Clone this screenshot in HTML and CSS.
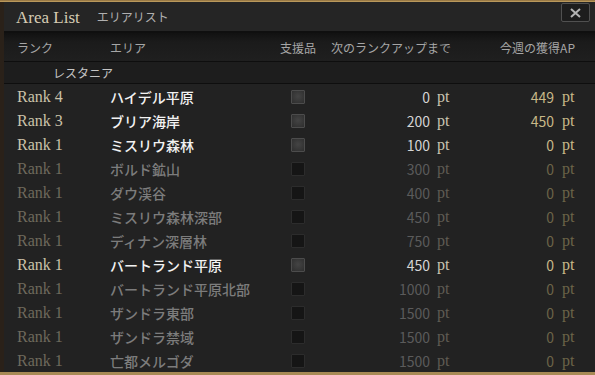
FILE: index.html
```html
<!DOCTYPE html>
<html lang="ja">
<head>
    <meta charset="UTF-8">
    <title>Area List</title>
    <link rel="stylesheet" href="styles.css">
</head>
<body>
    <div class="panel">
        <div class="titlebar">
            <span class="title-en">Area List</span>
            <span class="title-jp">エリアリスト</span>
            <button class="close">
                <svg width="11" height="10" viewBox="0 0 11 10"><path d="M1 1 L10 9 M10 1 L1 9" stroke="#b4b4b4" stroke-width="2" fill="none"/></svg>
            </button>
        </div>

        <div class="head">
            <span class="c-rank">ランク</span>
            <span class="c-area">エリア</span>
            <span class="c-sup">支援品</span>
            <span class="c-next">次のランクアップまで</span>
            <span class="c-ap">今週の獲得AP</span>
        </div>

        <div class="group">レスタニア</div>

        <div class="rows">
            <div class="row on">
                <span class="c-rank">Rank 4</span><span class="c-area">ハイデル平原</span>
                <span class="c-sup"><i class="box"></i></span>
                <span class="num">0</span><span class="pt">pt</span>
                <span class="ap">449</span><span class="pt ap-pt">pt</span>
            </div>
            <div class="row on">
                <span class="c-rank">Rank 3</span><span class="c-area">ブリア海岸</span>
                <span class="c-sup"><i class="box"></i></span>
                <span class="num">200</span><span class="pt">pt</span>
                <span class="ap">450</span><span class="pt ap-pt">pt</span>
            </div>
            <div class="row on">
                <span class="c-rank">Rank 1</span><span class="c-area">ミスリウ森林</span>
                <span class="c-sup"><i class="box"></i></span>
                <span class="num">100</span><span class="pt">pt</span>
                <span class="ap">0</span><span class="pt ap-pt">pt</span>
            </div>
            <div class="row">
                <span class="c-rank">Rank 1</span><span class="c-area">ボルド鉱山</span>
                <span class="c-sup"><i class="box"></i></span>
                <span class="num">300</span><span class="pt">pt</span>
                <span class="ap">0</span><span class="pt ap-pt">pt</span>
            </div>
            <div class="row">
                <span class="c-rank">Rank 1</span><span class="c-area">ダウ渓谷</span>
                <span class="c-sup"><i class="box"></i></span>
                <span class="num">400</span><span class="pt">pt</span>
                <span class="ap">0</span><span class="pt ap-pt">pt</span>
            </div>
            <div class="row">
                <span class="c-rank">Rank 1</span><span class="c-area">ミスリウ森林深部</span>
                <span class="c-sup"><i class="box"></i></span>
                <span class="num">450</span><span class="pt">pt</span>
                <span class="ap">0</span><span class="pt ap-pt">pt</span>
            </div>
            <div class="row">
                <span class="c-rank">Rank 1</span><span class="c-area">ディナン深層林</span>
                <span class="c-sup"><i class="box"></i></span>
                <span class="num">750</span><span class="pt">pt</span>
                <span class="ap">0</span><span class="pt ap-pt">pt</span>
            </div>
            <div class="row on">
                <span class="c-rank">Rank 1</span><span class="c-area">バートランド平原</span>
                <span class="c-sup"><i class="box"></i></span>
                <span class="num">450</span><span class="pt">pt</span>
                <span class="ap">0</span><span class="pt ap-pt">pt</span>
            </div>
            <div class="row">
                <span class="c-rank">Rank 1</span><span class="c-area">バートランド平原北部</span>
                <span class="c-sup"><i class="box"></i></span>
                <span class="num">1000</span><span class="pt">pt</span>
                <span class="ap">0</span><span class="pt ap-pt">pt</span>
            </div>
            <div class="row">
                <span class="c-rank">Rank 1</span><span class="c-area">ザンドラ東部</span>
                <span class="c-sup"><i class="box"></i></span>
                <span class="num">1500</span><span class="pt">pt</span>
                <span class="ap">0</span><span class="pt ap-pt">pt</span>
            </div>
            <div class="row">
                <span class="c-rank">Rank 1</span><span class="c-area">ザンドラ禁域</span>
                <span class="c-sup"><i class="box"></i></span>
                <span class="num">1500</span><span class="pt">pt</span>
                <span class="ap">0</span><span class="pt ap-pt">pt</span>
            </div>
            <div class="row">
                <span class="c-rank">Rank 1</span><span class="c-area">亡都メルゴダ</span>
                <span class="c-sup"><i class="box"></i></span>
                <span class="num">1500</span><span class="pt">pt</span>
                <span class="ap">0</span><span class="pt ap-pt">pt</span>
            </div>
        </div>
    </div>
</body>
</html>
```

FILE: styles.css
```css
body {
    margin: 0;
    padding: 0;
    width: 595px;
    height: 375px;
    overflow: hidden;
    background: linear-gradient(180deg, #8a6a3a 0, #c9a766 2px, #2a2119 2px, #2a2119 372px, #a88a55 372px);
    font-family: "Noto Sans CJK JP", "Noto Sans", sans-serif;
}

.panel {
    margin: 2px 0 0 4px;
    height: 370px;
    background: #222;
    overflow: hidden;
}

.titlebar {
    height: 29px;
    display: flex;
    align-items: center;
    padding-left: 12px;
    background: #252525;
    border-bottom: 2px solid #0f0f0f;
}

.title-en {
    font-family: "Liberation Serif", serif;
    font-size: 17px;
    color: #d6ccb4;
    margin-top: 2px;
}

.title-jp {
    font-size: 12px;
    color: #b0b0b0;
    margin-left: 17px;
}

.close {
    margin-left: auto;
    margin-right: 5px;
    align-self: flex-start;
    margin-top: 1px;
    width: 29px;
    height: 19px;
    padding: 0;
    border: 1px solid #505050;
    border-radius: 2px;
    background: #1d1d1d;
    display: flex;
    align-items: center;
    justify-content: center;
}

.head,
.row {
    display: flex;
    align-items: center;
    padding-left: 13px;
}

.head {
    height: 28px;
    background: linear-gradient(180deg, #111 0, #1b1b1b 9px, #1f1f1f 100%);
    border-bottom: 1px solid #0e0e0e;
    font-size: 12px;
    color: #a6a6a6;
}

.c-rank { width: 93px; }
.c-area { width: 170px; }
.c-sup { width: 36px; display: flex; justify-content: center; }

.head .c-sup { justify-content: flex-start; }
.head .c-next { padding-left: 15px; width: 126px; }
.head .c-ap { width: 118px; text-align: right; }

.group {
    height: 21px;
    line-height: 21px;
    padding-left: 49px;
    font-size: 12px;
    color: #c4c4c4;
    background: #1d1d1d;
    border-bottom: 1px solid #0e0e0e;
}

.rows {
    padding-top: 1px;
}

.row {
    height: 24px;
    color: #6f6f6f;
}

.row .c-rank {
    font-family: "Liberation Serif", serif;
    font-size: 16px;
    color: #6e695c;
}

.row .c-area {
    font-size: 14px;
    font-weight: 500;
    color: #7c7c7c;
}

.box {
    display: block;
    width: 12px;
    height: 12px;
    border: 1px solid #2c2c2c;
    background: #151515;
    border-radius: 1px;
}

.num {
    width: 114px;
    text-align: right;
    font-size: 14px;
    color: #5b5b5b;
}

.pt {
    width: 20px;
    margin-left: 7px;
    font-family: "Liberation Serif", serif;
    font-size: 16px;
    color: #5f5b52;
}

.ap {
    width: 97px;
    text-align: right;
    font-size: 14px;
    color: #6c6448;
}

.ap-pt {
    margin-left: 8px;
    color: #6c6448;
}

.row.on .c-rank { color: #cbc2aa; }
.row.on .c-area { color: #f2f2f2; }
.row.on .num { color: #d4d4d4; }
.row.on .pt { color: #c9c2b0; }
.row.on .ap { color: #c8b888; }
.row.on .ap-pt { color: #c8b888; }
.row.on .box {
    border-color: #4c4c4c;
    background: radial-gradient(circle at 50% 45%, #444 0, #2e2e2e 100%);
}
```
